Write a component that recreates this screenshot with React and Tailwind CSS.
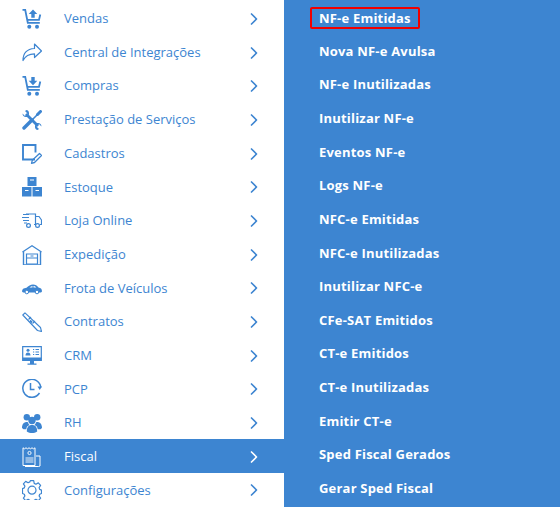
import { ChevronRight } from 'lucide-react';

const stroke = { fill: 'none', stroke: 'currentColor', strokeWidth: 1.2 };

// Menu icons, all on a 20x20 grid
const icons = {
  cartUp: (
    <>
      <path d="M0.500 0.800h2.700l2.600 13h12M18.300 5.500l-1.300 5.300H5.200" fill="none" stroke="currentColor" strokeWidth="1.800" />
      <path d="M11 0.500l4.300 4.500h-2.600v3.800H9.300V5H6.700z" fill="currentColor" />
      <circle cx="7.300" cy="17.800" r="2" fill="currentColor" />
      <circle cx="15" cy="17.800" r="2" fill="currentColor" />
    </>
  ),
  cartDown: (
    <>
      <path d="M0.500 0.800h2.700l2.600 13h12M18.300 5.500l-1.300 5.300H5.200" fill="none" stroke="currentColor" strokeWidth="1.800" />
      <path d="M11 9.300l4.300-4.500h-2.600V1H9.300v3.800H6.700z" fill="currentColor" />
      <circle cx="7.300" cy="17.800" r="2" fill="currentColor" />
      <circle cx="15" cy="17.800" r="2" fill="currentColor" />
    </>
  ),
  share: (
    <path d="M12.500 1l7 7-7 6.500v-3.700c-5 0-8.800 1.400-11.500 6.700 0-6.500 3.500-11.500 11.500-12z" {...stroke} strokeLinejoin="round" />
  ),
  tools: (
    <>
      {/* screwdriver */}
      <path d="M2 18l8-8" fill="none" stroke="currentColor" strokeWidth="3.400" strokeLinecap="round" />
      <path d="M10 10l6-6" fill="none" stroke="currentColor" strokeWidth="1.600" />
      <path d="M15.500 4.500L18.500 1.500" fill="none" stroke="currentColor" strokeWidth="3" strokeLinecap="round" />
      {/* wrench */}
      <path d="M4 4l12 12" fill="none" stroke="currentColor" strokeWidth="2.800" />
      <path d="M0.500 3.500l2.500 2.500 2.500-2.500L3 1l1.500-1C6.800 .3 7.500 2.500 6.800 5L4.800 7C2.500 7.500 .500 6 .500 3.500zM19.500 16.500L17 14l-2.500 2.500L17 19l-1.500 1c-2.300-.3-3-2.500-2.300-5l2-2c2.300-.5 4.300 1 4.300 3.500z" fill="currentColor" />
    </>
  ),
  note: (
    <>
      <path d="M13 15.500H1V1h12.500v7.500" fill="none" stroke="currentColor" strokeWidth="1.900" />
      <path d="M17.500 9.500l2 2-7 7-3 .8.800-3z" fill="none" stroke="currentColor" strokeWidth="1.300" strokeLinejoin="round" />
    </>
  ),
  boxes: (
    <>
      <path d="M5.500 0h9v9h-9zM0 10h9.500v9.500H0zM10.500 10H20v9.500h-9.500z" fill="currentColor" />
      <path d="M8 3h4M3 13.500h3.500M13.500 13.500H17" stroke="#fff" strokeWidth="1.200" />
    </>
  ),
  truck: (
    <>
      <path d="M4 3h9.500v10.500H12M6 13.500h-.5M13.500 5.500h3.500l2.500 3.500v4.500H18" {...stroke} />
      <path d="M1 3.500h6M0 6.500h7M1 9.500h6M2 12h3" stroke="currentColor" strokeWidth="1" fill="none" />
      <circle cx="6.500" cy="14.500" r="1.900" {...stroke} />
      <circle cx="15.500" cy="14.500" r="1.900" {...stroke} />
    </>
  ),
  garage: (
    <>
      <path d="M0.500 7L10 0.800 19.500 7" fill="none" stroke="currentColor" strokeWidth="1.200" />
      <path d="M1.500 6.500V20h17V6.500" fill="none" stroke="currentColor" strokeWidth="1.400" />
      <path d="M4.500 9h11v10h-11zM4.500 13h11" fill="none" stroke="currentColor" strokeWidth="1.200" />
      <path d="M8.500 11h3" stroke="currentColor" strokeWidth="1" />
    </>
  ),
  car: (
    <>
      <path d="M0 13.500c0-2.500 1.500-3.200 4.500-3.700C6.500 8 8.500 6.500 11 6.500c2.500 0 4 1 5.500 3 2 .5 3.500 1 3.500 4l-1 1H1z" fill="currentColor" />
      <path d="M7.500 9.500c1-1 2-1.500 3-1.500v1.500zM11.500 8c1 0 2 .5 2.800 1.500h-2.800z" fill="#fff" />
      <circle cx="4.800" cy="14" r="1.800" fill="#fff" stroke="currentColor" strokeWidth="1" />
      <circle cx="15" cy="14" r="1.800" fill="#fff" stroke="currentColor" strokeWidth="1" />
    </>
  ),
  pen: (
    <>
      <path d="M0.800 3L3 0.800l15.500 14.700 1 4-4-1z" fill="none" stroke="currentColor" strokeWidth="1.100" strokeLinejoin="round" />
      <path d="M6.500 7.500l2.500-2.500M10.500 11.500l2.500-2.500" stroke="currentColor" strokeWidth="1.100" />
      <path d="M8 8.500l2 2" stroke="currentColor" strokeWidth="1.800" />
    </>
  ),
  monitor: (
    <>
      <path d="M0.700 0.700h18.600v13.600H0.700z" fill="none" stroke="currentColor" strokeWidth="1.200" />
      <path d="M0.500 11.500h19v3h-19zM8 14.500h4v3H8zM5.500 17.500h9v1.200h-9z" fill="currentColor" />
      <circle cx="6" cy="4.300" r="1.500" fill="currentColor" />
      <path d="M3.500 9.500c0-2 1-3 2.500-3s2.500 1 2.500 3z" fill="currentColor" />
      <path d="M11 3.500h1.200M13.500 3.500h3.500M11 6h1.200M13.500 6h3.500M11 8.500h1.200M13.500 8.500h3.500" stroke="currentColor" strokeWidth="1" />
    </>
  ),
  clock: (
    <>
      <path d="M17.500 14A9 9 0 1 1 18.800 8.500" fill="none" stroke="currentColor" strokeWidth="1.500" />
      <path d="M8.500 4v6.500h4" fill="none" stroke="currentColor" strokeWidth="1.500" />
      <path d="M15.500 7.500h4.500L17.700 11z" fill="currentColor" />
    </>
  ),
  people: (
    <>
      <circle cx="4.800" cy="4.200" r="3.200" fill="currentColor" />
      <circle cx="15.200" cy="4.200" r="3.200" fill="currentColor" />
      <circle cx="10" cy="7.500" r="3.700" fill="currentColor" />
      <path d="M0 15c0-4 2-6 5-6 .8 0 1 .5 1.300 1.200.5 1 1.200 1.800 1.200 1.800-2 .8-3 2-3.200 4.300H1.500zM20 15c0-4-2-6-5-6-.8 0-1 .5-1.300 1.200-.5 1-1.200 1.800-1.200 1.800 2 .8 3 2 3.200 4.300h2.800zM4.800 18.500c0-4.500 2-6.500 5.200-6.500s5.200 2 5.200 6.500c-3.200 2-7.200 2-10.400 0z" fill="currentColor" />
    </>
  ),
  receipt: (
    <>
      <path d="M1 0.800l1.500 1 1.500-1 1.500 1 1.500-1 1.500 1 1.500-1 1.500 1 1.500-1V18.500H1z" fill="none" stroke="currentColor" strokeWidth="1" />
      <path d="M14 9h4v10l-1.500 .5H3" fill="none" stroke="currentColor" strokeWidth="1" />
      <circle cx="7.500" cy="6" r="1.600" fill="none" stroke="currentColor" strokeWidth="0.900" />
      <path d="M3.500 11h8M3.500 13h8M3.500 15h8" stroke="currentColor" strokeWidth="0.900" />
    </>
  ),
  gear: (
    <>
      <path d="M8.300 0.700h3.400l.5 2.700 1.700.8 2.400-1.300 2.300 2.500-1.500 2.200.6 1.800 1.800.7v3.400l-1.800.7-.6 1.800 1.500 2.200-2.300 2.500-2.400-1.300-1.700.8-.5 2.100H8.300l-.5-2.100-1.700-.8-2.400 1.300-2.300-2.500 1.500-2.200-.6-1.800-1.800-.7V8.600l1.800-.7.600-1.800-1.500-2.200 2.300-2.500 2.400 1.300 1.700-.8z" fill="none" stroke="currentColor" strokeWidth="1.200" strokeLinejoin="round" />
      <circle cx="10" cy="10.200" r="4" fill="none" stroke="currentColor" strokeWidth="1.200" />
    </>
  ),
};

const menu = [
  ['Vendas', 'cartUp'],
  ['Central de Integrações', 'share'],
  ['Compras', 'cartDown'],
  ['Prestação de Serviços', 'tools'],
  ['Cadastros', 'note'],
  ['Estoque', 'boxes'],
  ['Loja Online', 'truck'],
  ['Expedição', 'garage'],
  ['Frota de Veículos', 'car'],
  ['Contratos', 'pen'],
  ['CRM', 'monitor'],
  ['PCP', 'clock'],
  ['RH', 'people'],
  ['Fiscal', 'receipt'],
  ['Configurações', 'gear'],
];

const submenu = [
  'NF-e Emitidas',
  'Nova NF-e Avulsa',
  'NF-e Inutilizadas',
  'Inutilizar NF-e',
  'Eventos NF-e',
  'Logs NF-e',
  'NFC-e Emitidas',
  'NFC-e Inutilizadas',
  'Inutilizar NFC-e',
  'CFe-SAT Emitidos',
  'CT-e Emitidos',
  'CT-e Inutilizadas',
  'Emitir CT-e',
  'Sped Fiscal Gerados',
  'Gerar Sped Fiscal',
];

export default function App() {
  return (
    <div className="flex h-[507px] w-[560px] overflow-hidden bg-white font-['Open_Sans',sans-serif] text-[13px]">
      <ul className="w-[284px] shrink-0 pt-[1px]">
        {menu.map(([label, icon]) => {
          const active = label === 'Fiscal';
          return (
            <li
              key={label}
              className={`flex h-[33.7px] items-center pt-[2px] ${active ? 'bg-[#3d85d1] text-white' : 'text-[#3d85d1]'}`}
            >
              <svg viewBox="0 0 20 20" className="ml-[22px] h-[20px] w-[20px] shrink-0">
                {icons[icon]}
              </svg>
              <span className="ml-[22px] flex-1">{label}</span>
              <ChevronRight size={20} strokeWidth={2} className="mr-[20px]" />
            </li>
          );
        })}
      </ul>
      <ul className="flex-1 bg-[#3d85d1] font-[750] tracking-[0.2px] text-white">
        {submenu.map((label, i) => (
          <li key={label} className="flex h-[33.65px] items-center pt-[2px] pl-[35px]">
            <span className={i === 0 ? 'rounded-[2px] border-2 border-[#f00000] px-[7px] leading-[18px] -ml-[9px]' : ''}>
              {label}
            </span>
          </li>
        ))}
      </ul>
    </div>
  );
}
